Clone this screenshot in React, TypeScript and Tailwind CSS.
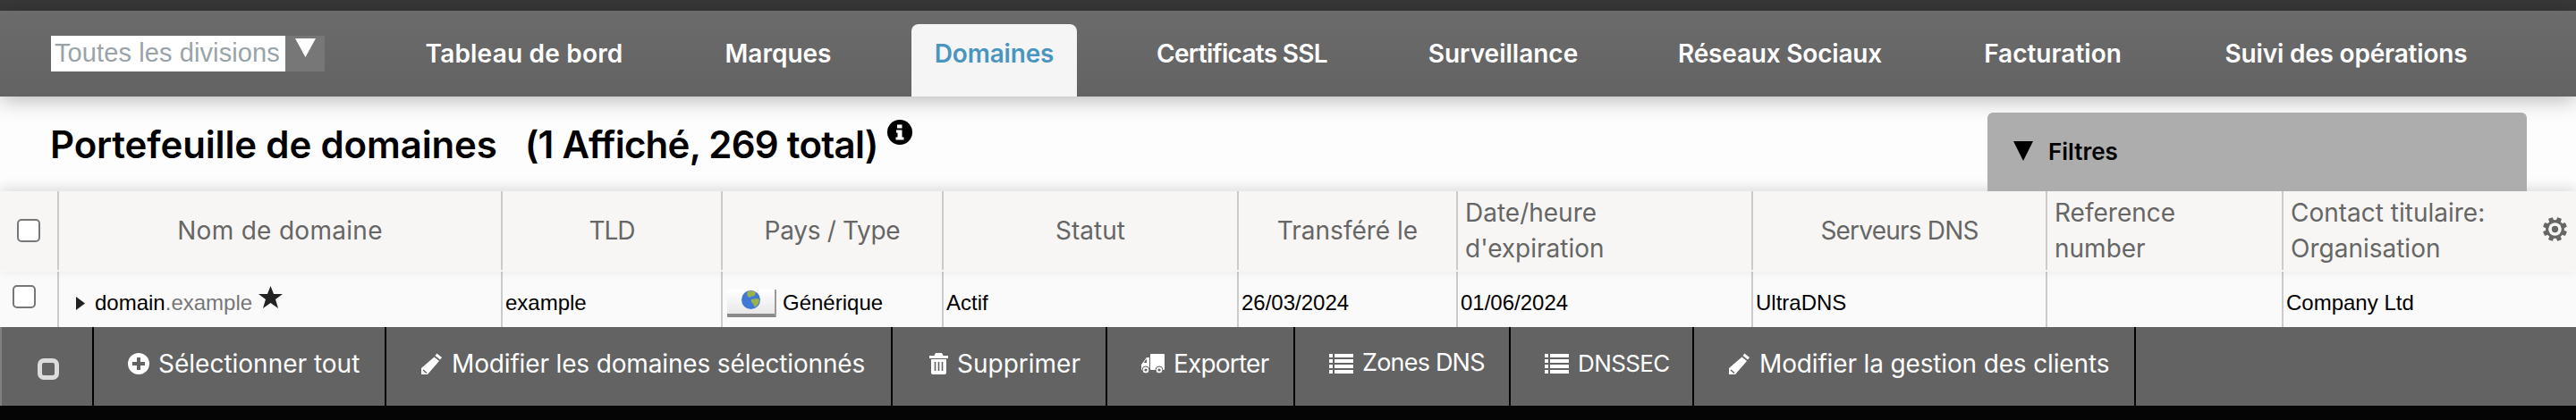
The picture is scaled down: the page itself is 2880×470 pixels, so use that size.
import { ReactNode } from "react";

const navItems = [
  { label: "Tableau de bord", width: "w-[270px]", text: "tracking-[0.2px]" },
  { label: "Marques", width: "w-[170px]", text: "" },
  { label: "Domaines", width: "w-[185px]", text: "tracking-[-0.2px]", active: true },
  { label: "Certificats SSL", width: "w-[241px]", text: "tracking-[-0.7px]" },
  { label: "Surveillance", width: "w-[215px]", text: "" },
  { label: "Réseaux Sociaux", width: "w-[276px]", text: "tracking-[-0.2px]" },
  { label: "Facturation", width: "w-[206px]", text: "" },
  { label: "Suivi des opérations", width: "w-[322px]", text: "tracking-[-0.2px]" },
];

function PlusIcon() {
  return (
    <svg width="24" height="24" viewBox="0 0 24 24" className="shrink-0">
      <circle cx="12" cy="12" r="12" fill="#fff" />
      <path d="M10 5h4v5h5v4h-5v5h-4v-5H5v-4h5z" fill="#636363" />
    </svg>
  );
}

function PencilIcon() {
  return (
    <svg width="25" height="24" viewBox="0 0 25 24" className="shrink-0">
      <path d="M18.5 0.5 24 5 22 7.5 16.5 3z" fill="#fff" />
      <path d="M15.5 4.5 21 9 8 24H1V17z" fill="#fff" />
      <path d="M3 19 7 22.5" stroke="#636363" strokeWidth="1.5" />
    </svg>
  );
}

function TrashIcon() {
  return (
    <svg width="21" height="24" viewBox="0 0 21 24" className="shrink-0">
      <path d="M7 0h7l1.5 3H21v3H0V3h5.5z" fill="#fff" />
      <path d="M2 7h17v15a2 2 0 0 1-2 2H4a2 2 0 0 1-2-2z" fill="#fff" />
      <path d="M6.5 10v10M10.500 10v10M14.500 10v10" stroke="#636363" strokeWidth="1.6" />
    </svg>
  );
}

function TruckIcon() {
  return (
    <svg width="26" height="22" viewBox="0 0 26 22" className="shrink-0">
      <path d="M10 1a1 1 0 0 1 1-1h14a1 1 0 0 1 1 1v16a1 1 0 0 1-1 1H11a1 1 0 0 1-1-1z" fill="#fff" />
      <path d="M9 4H6L1.500 10 0 12v6h9z" fill="#fff" />
      <path d="M6 6.500H5L2.800 10H6z" fill="#636363" />
      <circle cx="5" cy="18" r="4" fill="#fff" stroke="#636363" strokeWidth="1" />
      <circle cx="5" cy="18" r="1.600" fill="#636363" />
      <circle cx="20" cy="18" r="4" fill="#fff" stroke="#636363" strokeWidth="1" />
      <circle cx="20" cy="18" r="1.600" fill="#636363" />
    </svg>
  );
}

function ListIcon() {
  return (
    <svg width="27" height="22" viewBox="0 0 27 22" className="shrink-0" fill="#fff">
      <path d="M0 0h4v4H0zM6 0h21v4H6zM0 6h4v4H0zM6 6h21v4H6zM0 12h4v4H0zM6 12h21v4H6zM0 18h4v4H0zM6 18h21v4H6z" />
    </svg>
  );
}

function StarIcon() {
  return (
    <svg width="27" height="25" viewBox="0 0 27 25" className="shrink-0">
      <path d="M13.500 0 17 9h10l-8 6 3 10-8.500-6L5 25l3-10-8-6h10z" fill="#222" />
    </svg>
  );
}

function InfoIcon() {
  return (
    <svg width="28" height="28" viewBox="0 0 28 28" className="shrink-0">
      <circle cx="14" cy="14" r="14" fill="#000" />
      <path d="M11 5.500h5.500V9.500H11zM10 11.500h6.500v8H18.500v3H9.500v-3H11.500v-5H10z" fill="#fff" />
    </svg>
  );
}

function GearIcon() {
  return (
    <svg width="27" height="27" viewBox="0 0 26 26" className="shrink-0">
      {[0, 45, 90, 135].map((deg) => (
        <rect key={deg} x="10.500" y="0" width="5" height="26" rx="1" fill="#666" transform={`rotate(${deg + 22.5} 13 13)`} />
      ))}
      <circle cx="13" cy="13" r="10" fill="#666" />
      <circle cx="13" cy="13" r="7" fill="#f7f6f4" />
      <circle cx="13" cy="13" r="3.500" fill="#666" />
    </svg>
  );
}

function GlobeIcon() {
  return (
    <svg width="21" height="21" viewBox="0 0 21 21">
      <circle cx="10.500" cy="10.500" r="10.500" fill="#3f78d6" />
      <path d="M7 1.500c3-1.500 7-1 9 .5l-1 3-2 2-2-1-1 2-3-1-1-3zM11 10l6-1 3 1c0 4-2 7-5 9l-2-4-2-2z" fill="#9cb04c" />
    </svg>
  );
}

function Checkbox() {
  return <span className="block h-[26px] w-[26px] rounded-[5px] border-2 border-[#777] bg-white" />;
}

function Th({ left, children }: { left?: boolean; children: ReactNode }) {
  return (
    <div
      className={`flex h-full items-center border-l-2 border-[#cbcbcb] text-[28px] leading-[40px] text-[#666] ${
        left ? "justify-start pl-[8px]" : "justify-center text-center"
      }`}
    >
      <span>{children}</span>
    </div>
  );
}

function Td({ children }: { children?: ReactNode }) {
  return (
    <div className="flex items-center border-l-2 border-[#cbcbcb] pl-[3px] pt-[8px] text-[24px] text-black">
      {children}
    </div>
  );
}

function Action({ width, icon, label, text = "text-[28px]", inset = "pl-[38px]" }: { width: string; icon: ReactNode; label: string; text?: string; inset?: string }) {
  return (
    <div className={`${width} ${inset} flex items-center gap-[10px] border-r-2 border-black pb-[7px] text-white`}>
      {icon}
      <span className={`whitespace-nowrap ${text}`}>{label}</span>
    </div>
  );
}

export default function App() {
  return (
    <div className="h-[470px] w-[2880px] overflow-hidden bg-[#fdfdfd] font-['Inter',sans-serif]">
      <div className="h-[12px] bg-[#383838]" />

      <nav className="relative z-10 flex h-[96px] bg-gradient-to-b from-[#6b6b6b] to-[#636363] pl-[57px] pt-[15px] shadow-[0_4px_22px_rgba(0,0,0,0.28)]">
        <div className="mt-[13px] flex h-[40px] w-[306px] shrink-0">
          <div className="flex w-[262px] items-center whitespace-nowrap bg-white pl-[4px] font-['Liberation_Sans',sans-serif] text-[29px] tracking-[0.1px] text-[#9aa3a8]">
            Toutes les divisions
          </div>
          <div className="flex flex-1 justify-center bg-[#777] pt-[3px]">
            <svg width="23" height="21" viewBox="0 0 23 21">
              <path d="M0 0h23L11.500 21z" fill="#fff" />
            </svg>
          </div>
        </div>
        <ul className="ml-[88px] flex gap-[64px]">
          {navItems.map((item) => (
            <li
              key={item.label}
              className={`${item.width} ${item.text} flex justify-center whitespace-nowrap pt-[12px] text-[28px] font-semibold ${
                item.active ? "rounded-t-[8px] bg-[#f5f5f5] text-[#4a95bf]" : "text-white"
              }`}
            >
              {item.label}
            </li>
          ))}
        </ul>
      </nav>

      <div className="flex h-[106px]">
        <h1 className="ml-[56px] flex items-center whitespace-pre text-[42px] font-semibold text-black">
          <span className="tracking-[-0.15px]">Portefeuille de domaines</span>
          <span className="ml-[31px] tracking-[-0.75px]">(1 Affiché, 269 total)</span>
        </h1>
        <div className="ml-[10px] mt-[26px]">
          <InfoIcon />
        </div>
        <div className="relative z-10 ml-auto mr-[55px] mt-[18px] flex w-[603px] items-center gap-[17px] rounded-t-[6px] bg-[#adadad] pb-[2px] pl-[29px] text-[26px] font-semibold text-black">
          <svg width="22" height="22" viewBox="0 0 22 22">
            <path d="M0 0h22L11 22z" fill="#000" />
          </svg>
          Filtres
        </div>
      </div>

      <div className="relative grid h-[88px] grid-cols-[64px_496px_246px_247px_330px_245px_330px_329px_264px_329px] bg-[#f7f6f4] shadow-[0_-3px_14px_rgba(0,0,0,0.14)]">
        <div className="flex items-center pl-[19px]">
          <Checkbox />
        </div>
        <Th>
          <span className="tracking-[0.3px]">Nom de domaine</span>
        </Th>
        <Th>
          <span className="tracking-[-1px]">TLD</span>
        </Th>
        <Th>
          <span className="tracking-[-0.3px]">Pays / Type</span>
        </Th>
        <Th>Statut</Th>
        <Th>Transféré le</Th>
        <Th left>
          Date/heure
          <br />
          d'expiration
        </Th>
        <Th>
          <span className="tracking-[-0.8px]">Serveurs DNS</span>
        </Th>
        <Th left>
          Reference
          <br />
          number
        </Th>
        <div className="relative">
          <Th left>
            Contact titulaire:
            <br />
            Organisation
          </Th>
          <div className="absolute right-[10px] top-[29px]">
            <GearIcon />
          </div>
        </div>
      </div>

      <div className="grid h-[64px] grid-cols-[64px_496px_246px_247px_330px_245px_330px_329px_264px_329px] border-t-2 border-white bg-[#fafafa] font-['Liberation_Sans',sans-serif]">
        <div className="pl-[14px] pt-[15px]">
          <Checkbox />
        </div>
        <div className="flex items-center border-l-2 border-[#cbcbcb] pl-[19px] pt-[8px] text-[24px] text-black">
          <svg width="10" height="15" viewBox="0 0 10 15" className="mr-[11px]">
            <path d="M0 0l10 7.500L0 15z" fill="#222" />
          </svg>
          <span>domain</span>
          <span className="text-[#777]">.example</span>
          <span className="mb-[14px] ml-[7px]">
            <StarIcon />
          </span>
        </div>
        <Td>example</Td>
        <div className="flex items-center border-l-2 border-[#cbcbcb] pl-[5px] pt-[8px] text-[24px] text-black">
          <span className="mr-[7px] flex h-[31px] w-[55px] justify-center rounded-[1px] border-b-[4px] border-r-[2px] border-b-[#8a8a8a] border-r-[#9a9a9a] bg-gradient-to-b from-white to-[#e8e8e8] pt-[1px]">
            <GlobeIcon />
          </span>
          Générique
        </div>
        <Td>Actif</Td>
        <Td>26/03/2024</Td>
        <Td>01/06/2024</Td>
        <Td>UltraDNS</Td>
        <Td />
        <Td>Company Ltd</Td>
      </div>

      <div className="flex h-[88px] bg-[#636363]">
        <div className="flex w-[105px] items-center border-l-2 border-r-2 border-l-[#808080] border-r-black pl-[40px] pt-[6px]">
          <span className="block h-[24px] w-[24px] rounded-[7px] border-[5px] border-[#dcdcdc] blur-[0.5px]" />
        </div>
        <Action width="w-[327px]" icon={<PlusIcon />} label="Sélectionner tout" />
        <Action width="w-[566px]" icon={<PencilIcon />} label="Modifier les domaines sélectionnés" text="text-[28px] tracking-[-0.15px]" />
        <Action width="w-[240px]" icon={<TrashIcon />} label="Supprimer" inset="pl-[41px]" />
        <Action width="w-[210px]" icon={<TruckIcon />} label="Exporter" text="text-[28px] tracking-[-0.8px]" />
        <Action width="w-[241px]" icon={<ListIcon />} label="Zones DNS" text="text-[27px] tracking-[-0.8px]" />
        <Action width="w-[205px]" icon={<ListIcon />} label="DNSSEC" text="text-[26px] tracking-[-0.6px]" />
        <Action width="w-[494px]" icon={<PencilIcon />} label="Modifier la gestion des clients" text="text-[28px] tracking-[-0.15px]" />
      </div>

      <div className="h-[16px] bg-[#050505]" />
    </div>
  );
}
